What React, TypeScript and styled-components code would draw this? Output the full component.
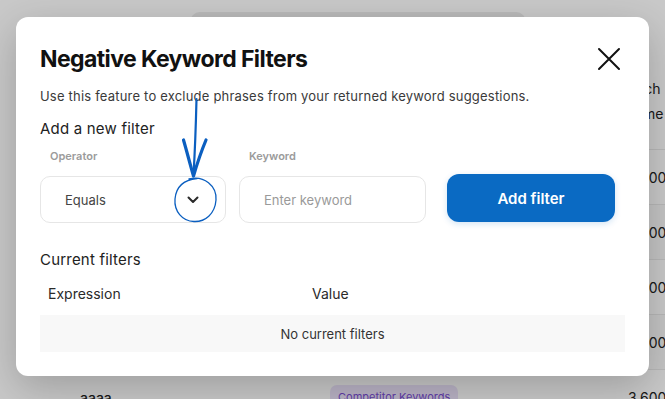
import React from 'react';
import styled, { createGlobalStyle } from 'styled-components';

const GlobalStyle = createGlobalStyle`
  html, body {
    margin: 0;
    padding: 0;
    background: #ffffff;
    font-family: Inter, "Noto Sans", "Liberation Sans", sans-serif;
  }
  * { box-sizing: border-box; }
`;

const rows = [
  { name: '', tag: '', volume: '3,600' },
  { name: '', tag: '', volume: '3,600' },
  { name: '', tag: '', volume: '3,600' },
  { name: '', tag: '', volume: '3,600' },
  { name: 'aaaa', tag: 'Competitor Keywords', volume: '3,600' },
];

export default function App() {
  return (
    <>
      <GlobalStyle />
      <Stage>
        <Page>
          <TopCard />
          <Table>
            <HeaderRow>
              <span />
              <span />
              <HeadCell>
                <span>Search</span>
                <span>Volume</span>
              </HeadCell>
            </HeaderRow>
            {rows.map((r, i) => (
              <Row key={i}>
                <Name>{r.name}</Name>
                <span>{r.tag && <Tag>{r.tag}</Tag>}</span>
                <Volume>{r.volume}</Volume>
              </Row>
            ))}
          </Table>
        </Page>

        <Overlay>
          <Modal>
            <TitleRow>
              <Title>Negative Keyword Filters</Title>
              <CloseButton aria-label="Close">
                <svg width="24" height="24" viewBox="0 0 24 24" fill="none">
                  <path d="M2 2L22 22M22 2L2 22" stroke="#111" strokeWidth="2" strokeLinecap="round" />
                </svg>
              </CloseButton>
            </TitleRow>
            <Intro>Use this feature to exclude phrases from your returned keyword suggestions.</Intro>
            <SectionTitle>Add a new filter</SectionTitle>
            <FieldRow>
              <Field $width={186}>
                <Label>Operator</Label>
                <Box>
                  <BoxText>Equals</BoxText>
                  <svg width="12" height="8" viewBox="0 0 12 8" fill="none">
                    <path d="M1.5 1.5L6 6L10.5 1.5" stroke="#2a2a2a" strokeWidth="2" strokeLinecap="round" strokeLinejoin="round" />
                  </svg>
                </Box>
              </Field>
              <Field $width={187}>
                <Label>Keyword</Label>
                <Box>
                  <BoxText $placeholder>Enter keyword</BoxText>
                </Box>
              </Field>
              <AddButton>Add filter</AddButton>
            </FieldRow>
            <SectionTitle $top={27}>Current filters</SectionTitle>
            <FilterHead>
              <span>Expression</span>
              <span>Value</span>
            </FilterHead>
            <EmptyRow>No current filters</EmptyRow>
          </Modal>
        </Overlay>

        <Annotation width="665" height="399" viewBox="0 0 665 399" fill="none">
          <path d="M196.5 99 C196 120, 195 150, 193.5 175" stroke="#0b5fc0" strokeWidth="2.2" strokeLinecap="round" />
          <path d="M183.5 140 C187 152, 190 164, 193.5 176 C197 164, 201 152, 206 140" stroke="#0b5fc0" strokeWidth="3.2" strokeLinecap="round" strokeLinejoin="round" />
          <path
            d="M189 179 C204 175, 217 186, 216 200 C215 214, 205 222, 194 221.5 C182 221, 174 211, 175 199 C176 187, 183 180, 197 178.5"
            stroke="#0b5fc0"
            strokeWidth="1.3"
            strokeLinecap="round"
          />
        </Annotation>
      </Stage>
    </>
  );
}

const Stage = styled.div`
  position: relative;
  width: 665px;
  height: 399px;
  overflow: hidden;
  background: #ffffff;
`;

const Page = styled.div`
  display: flex;
  flex-direction: column;
  padding-top: 12px;
`;

const TopCard = styled.div`
  margin-left: 190px;
  width: 336px;
  height: 34px;
  border-radius: 10px;
  background: #ececec;
`;

const Table = styled.div`
  margin-left: 60px;
  margin-top: 24px;
  display: flex;
  flex-direction: column;
`;

const HeaderRow = styled.div`
  display: grid;
  grid-template-columns: 250px 318px 1fr;
  height: 79px;
  padding: 6px 0 0 20px;
  font-size: 14px;
  color: #222;
`;

const HeadCell = styled.div`
  display: flex;
  flex-direction: column;
  line-height: 25px;
  margin-left: -34px;
  white-space: nowrap;
`;

const Row = styled.div`
  display: grid;
  grid-template-columns: 250px 318px 1fr;
  align-items: center;
  height: 55px;
  padding-left: 20px;
  border-top: 1px solid #eaeaea;
  font-size: 14px;
  color: #222;
  &:nth-child(odd) {
    background: #fafafa;
  }
`;

const Name = styled.span`
  font-weight: 500;
`;

const Tag = styled.span`
  display: inline-block;
  padding: 5px 8px;
  border-radius: 7px;
  background: #ece4fb;
  color: #7b4fd6;
  font-size: 11px;
  white-space: nowrap;
`;

const Volume = styled.span`
  margin-left: -20px;
  white-space: nowrap;
`;

const Overlay = styled.div`
  position: absolute;
  inset: 0;
  background: rgba(0, 0, 0, 0.21);
  padding: 17px 0 0 16px;
`;

const Modal = styled.div`
  width: 633px;
  height: 359px;
  background: #ffffff;
  border-radius: 12px;
  box-shadow: 0 12px 40px rgba(0, 0, 0, 0.22);
  padding: 30px 24px 24px;
  display: flex;
  flex-direction: column;
`;

const TitleRow = styled.div`
  display: flex;
  align-items: center;
  justify-content: space-between;
  height: 24px;
`;

const Title = styled.h2`
  margin: 0;
  font-size: 23px;
  line-height: 24px;
  font-weight: 700;
  letter-spacing: -0.6px;
  color: #111111;
`;

const CloseButton = styled.button`
  border: none;
  background: none;
  padding: 0;
  margin-right: 4px;
  width: 24px;
  height: 24px;
  display: flex;
`;

const Intro = styled.p`
  margin: 16px 0 0;
  font-size: 13px;
  line-height: 18px;
  color: #3a3a3a;
  letter-spacing: 0.2px;
`;

const SectionTitle = styled.h3<{ $top?: number }>`
  margin: ${(p) => p.$top ?? 14}px 0 0;
  font-size: 15px;
  line-height: 20px;
  font-weight: 400;
  letter-spacing: 0.2px;
  color: #222222;
`;

const FieldRow = styled.div`
  display: flex;
  align-items: flex-end;
  margin-top: 10px;
`;

const Field = styled.div<{ $width: number }>`
  width: ${(p) => p.$width}px;
  margin-right: 13px;
  display: flex;
  flex-direction: column;
  gap: 13px;
`;

const Label = styled.span`
  padding-left: 10px;
  font-size: 11px;
  line-height: 14px;
  font-weight: 600;
  color: #9b9b9b;
`;

const Box = styled.div`
  height: 47px;
  border: 1px solid #e6e6e6;
  border-radius: 10px;
  display: flex;
  align-items: center;
  justify-content: space-between;
  padding: 0 26px 0 24px;
`;

const BoxText = styled.span<{ $placeholder?: boolean }>`
  font-size: 13px;
  color: ${(p) => (p.$placeholder ? '#9a9a9a' : '#444444')};
`;

const AddButton = styled.button`
  margin-left: 8px;
  margin-bottom: 1px;
  width: 168px;
  height: 48px;
  border: none;
  border-radius: 12px;
  background: #0a6ac3;
  color: #ffffff;
  font-family: Inter, "Liberation Sans", sans-serif;
  font-size: 15px;
  font-weight: 600;
  box-shadow: 0 2px 6px rgba(10, 106, 195, 0.18);
`;

const FilterHead = styled.div`
  display: grid;
  grid-template-columns: 264px 1fr;
  margin-top: 14px;
  padding-left: 8px;
  font-size: 14px;
  line-height: 20px;
  color: #2a2a2a;
`;

const EmptyRow = styled.div`
  margin-top: 11px;
  height: 37px;
  background: #f8f8f8;
  display: flex;
  align-items: center;
  justify-content: center;
  font-size: 13px;
  color: #333333;
`;

const Annotation = styled.svg`
  position: absolute;
  left: 0;
  top: 0;
  pointer-events: none;
`;
